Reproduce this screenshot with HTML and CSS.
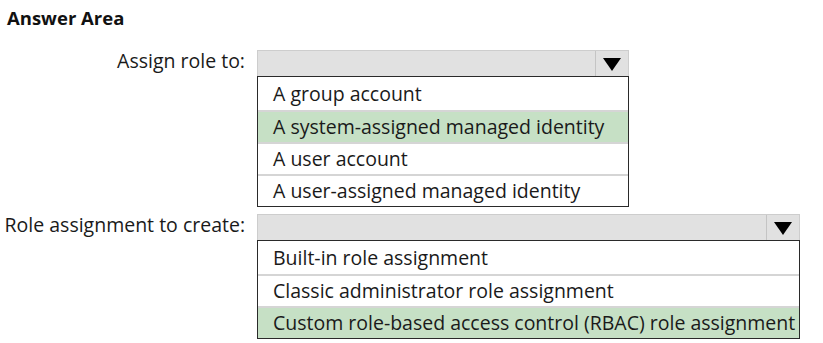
FILE: index.html
```html
<!DOCTYPE html>
<html>
<head>
    <link rel="stylesheet" href="styles.css">
</head>
<body>
    <h1>Answer Area</h1>

    <div class="field">
        <div class="label">Assign role to:</div>
        <div class="dropdown first">
            <div class="select">
                <span class="arrow"></span>
            </div>
            <ul class="options">
                <li>A group account</li>
                <li class="picked">A system-assigned managed identity</li>
                <li>A user account</li>
                <li>A user-assigned managed identity</li>
            </ul>
        </div>
    </div>

    <div class="field">
        <div class="label">Role assignment to create:</div>
        <div class="dropdown second">
            <div class="select">
                <span class="arrow"></span>
            </div>
            <ul class="options">
                <li>Built-in role assignment</li>
                <li>Classic administrator role assignment</li>
                <li class="picked">Custom role-based access control (RBAC) role assignment</li>
            </ul>
        </div>
    </div>
</body>
</html>
```

FILE: styles.css
```css
body {
    margin: 0;
    padding: 6px 0 0;
    background: #fff;
    color: #1a1a1a;
    font-family: 'Open Sans', 'Noto Sans', sans-serif;
}
h1 {
    font-size: 18.5px;
    font-weight: bold;
    margin: 0 0 20px 7px;
    line-height: 24px;
    color: #111;
}
.field {
    display: grid;
    grid-template-columns: 257px auto;
    margin-bottom: 7px;
}
.label {
    text-align: right;
    padding-right: 12px;
    font-size: 19.5px;
    line-height: 22px;
    white-space: nowrap;
}
.first { width: 372px; }
.second { width: 543px; }
.select {
    height: 25px;
    background: #e1e1e1;
    border: 1px solid #cdcdcd;
    border-bottom: none;
    display: flex;
    justify-content: flex-end;
}
.arrow {
    width: 32px;
    border-left: 1px solid #c4c4c4;
    display: flex;
    align-items: center;
    justify-content: center;
}
.arrow::after {
    content: '';
    border-left: 9px solid transparent;
    border-right: 9px solid transparent;
    border-top: 13px solid #000;
    margin-top: 2px;
}
.options {
    list-style: none;
    margin: 0;
    padding: 0;
    border: 1px solid #2a2a2a;
}
.options li {
    height: 30px;
    line-height: 30px;
    padding-left: 15px;
    font-size: 19.5px;
    white-space: nowrap;
    border-top: 2px solid #d5d5d5;
}
.options li:first-child {
    border-top: none;
    height: 33px;
    line-height: 33px;
}
.options li.picked { background: #c6e0c5; }
```
